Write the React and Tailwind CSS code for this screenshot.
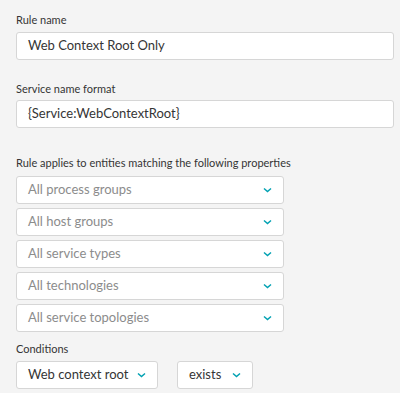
import React from 'react';

const Chevron = () => (
  <svg width="9" height="6" viewBox="0 0 9 6" fill="none" className="shrink-0">
    <path d="M1 1.5l3.5 3L8 1.5" stroke="#00a1b2" strokeWidth="1.5" />
  </svg>
);

const Select = ({ label, muted = true, className = '' }) => (
  <div
    className={`flex h-7 items-center justify-between rounded-[3px] border border-[#d6d6d6] bg-white pl-[11px] pr-[11px] ${className}`}
  >
    <span className={`whitespace-nowrap text-[13px] ${muted ? 'text-[#8c8c8c]' : 'text-[#353535]'}`}>{label}</span>
    <Chevron />
  </div>
);

const Label = ({ children, className = '' }) => (
  <div className={`text-[11px] leading-4 text-[#353535] ${className}`}>{children}</div>
);

const Input = ({ value }) => (
  <div className="mt-1 flex h-7 items-center rounded-[3px] border border-[#d6d6d6] bg-white pl-[11px] text-[13px] text-[#353535]">
    {value}
  </div>
);

export default function App() {
  const filters = [
    'All process groups',
    'All host groups',
    'All service types',
    'All technologies',
    'All service topologies',
  ];

  return (
    <div
      className="h-[393px] w-[400px] overflow-hidden bg-[#f4f4f4] pl-4 pr-[6px] pt-[12px]"
      style={{ fontFamily: 'Lato, "Open Sans", sans-serif' }}
    >
      <Label>Rule name</Label>
      <Input value="Web Context Root Only" />

      <Label className="mt-[21px]">Service name format</Label>
      <div className="mt-[-1px]">
        <Input value="{Service:WebContextRoot}" />
      </div>

      <Label className="mt-[27px]">Rule applies to entities matching the following properties</Label>
      <div className="mt-[5px] flex w-[268px] flex-col gap-1">
        {filters.map((f) => (
          <Select key={f} label={f} />
        ))}
      </div>

      <Label className="mt-[9px]">Conditions</Label>
      <div className="mt-1 flex gap-[19px]">
        <Select label="Web context root" muted={false} className="w-[142px]" />
        <Select label="exists" muted={false} className="w-[76px]" />
      </div>
    </div>
  );
}
